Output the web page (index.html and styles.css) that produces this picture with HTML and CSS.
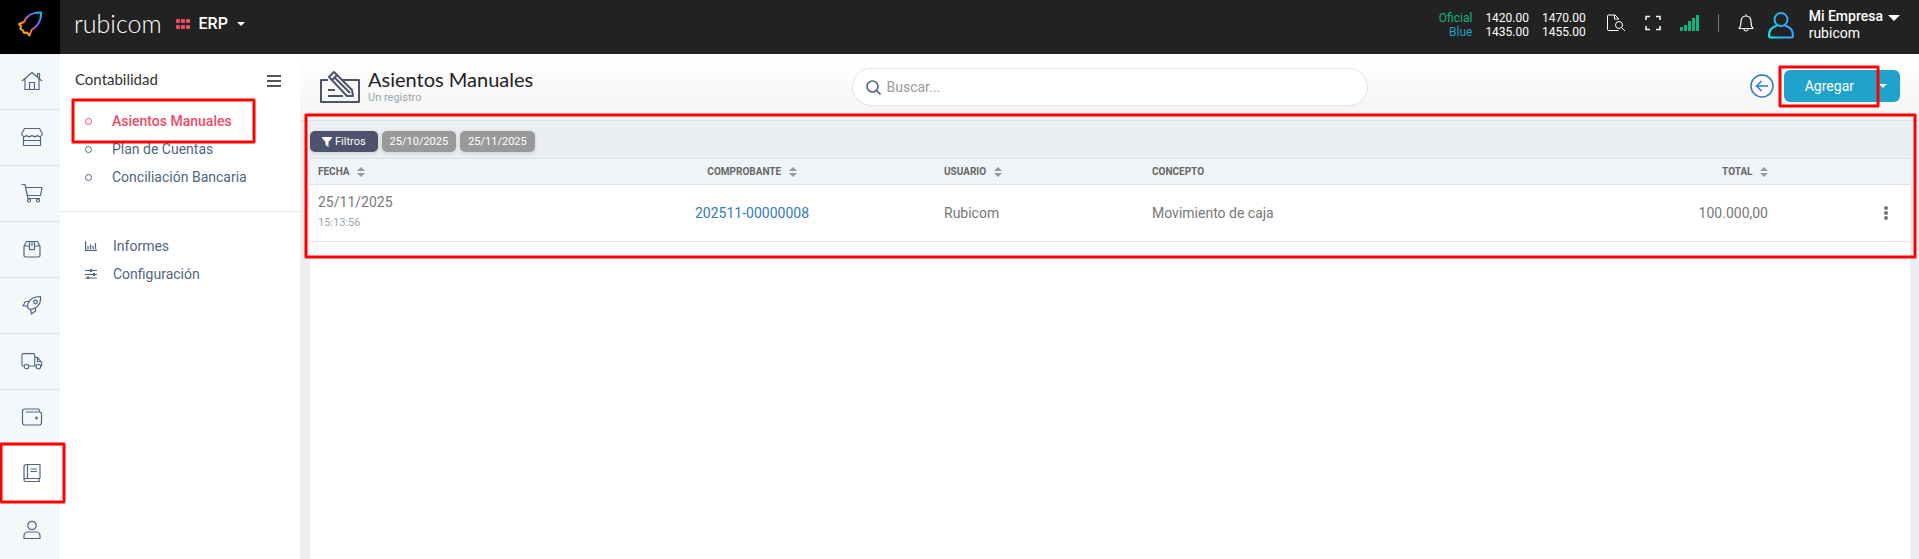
FILE: index.html
```html
<!DOCTYPE html>
<html lang="es">
<head>
    <meta charset="UTF-8">
    <meta name="viewport" content="width=device-width, initial-scale=1.0">
    <title>Asientos Manuales</title>
    <link rel="stylesheet" href="styles.css">
</head>
<body>

    <!-- Barra superior -->
    <header class="topbar">
        <a href="#" class="logo" aria-label="Inicio">
            <svg width="26" height="26" viewBox="0 0 26 26" fill="none" stroke-width="2" stroke-linecap="round" stroke-linejoin="round">
                <defs>
                    <linearGradient id="grad-logo" gradientUnits="userSpaceOnUse" x1="2" y1="20" x2="24" y2="6">
                        <stop offset="0" stop-color="#ffc107"/>
                        <stop offset="0.3" stop-color="#ff8a1e"/>
                        <stop offset="0.55" stop-color="#c44fc0"/>
                        <stop offset="0.75" stop-color="#6a5cf0"/>
                        <stop offset="1" stop-color="#22b8f0"/>
                    </linearGradient>
                </defs>
                <path stroke="url(#grad-logo)" d="M24 1.500C17 1 10 4 7 11L2 13L4 15L3.500 18L6 19.500L7 22L10 21.500L12.500 24.500L14.500 19C21 15 24.500 9 24 1.500Z"/>
            </svg>
        </a>
        <span class="marca">rubicom</span>
        <button type="button" class="modulo">
            <svg width="14" height="10" viewBox="0 0 14 10" fill="#ee4b67">
                <rect width="4" height="4" rx="1"/><rect x="5" width="4" height="4" rx="1"/><rect x="10" width="4" height="4" rx="1"/>
                <rect y="6" width="4" height="4" rx="1"/><rect x="5" y="6" width="4" height="4" rx="1"/><rect x="10" y="6" width="4" height="4" rx="1"/>
            </svg>
            <span>ERP</span>
            <i class="flecha"></i>
        </button>

        <div class="cotizaciones">
            <span class="oficial">Oficial</span><span>1420.00</span><span>1470.00</span>
            <span class="blue">Blue</span><span>1435.00</span><span>1455.00</span>
        </div>

        <div class="herramientas">
            <button type="button" aria-label="Buscar documento">
                <svg width="20" height="18" viewBox="0 0 20 18" fill="none" stroke="#fff">
                    <path d="M12.500 16.500H2.500Q1.500 16.500 1.500 15.500V2Q1.500 1 2.500 1H9L12.500 4.500V5.500M8.500 1V5H12.500"/>
                    <circle cx="13" cy="11" r="3.500"/><path d="M15.500 13.500L19 17"/>
                </svg>
            </button>
            <button type="button" aria-label="Pantalla completa">
                <svg width="16" height="16" viewBox="0 0 16 16" fill="none" stroke="#fff" stroke-width="1.500">
                    <path d="M1 5V1.500H5M11 1.500H15V5M15 11V14.500H11M5 14.500H1V11"/>
                </svg>
            </button>
            <svg width="19" height="16" viewBox="0 0 19 16" fill="#0fb67c">
                <rect y="12" width="3" height="4"/><rect x="4" y="10" width="3" height="6"/><rect x="8" y="6" width="3" height="10"/><rect x="12" y="3" width="3" height="13"/><rect x="16" width="3" height="16"/>
            </svg>
            <i class="separador"></i>
            <button type="button" aria-label="Notificaciones">
                <svg width="16" height="18" viewBox="0 0 16 18" fill="none" stroke="#fff" stroke-width="1.200" stroke-linecap="round" stroke-linejoin="round">
                    <path d="M8 .8V2M1 14.500H15C13 12.500 13 11 13 8Q13 2 8 2Q3 2 3 8C3 11 3 12.500 1 14.500ZM6 15.500Q8 18.500 10 15.500"/>
                </svg>
            </button>
        </div>

        <button type="button" class="usuario">
            <svg width="26" height="27" viewBox="0 0 26 27" fill="none" stroke="url(#grad-user)" stroke-width="2">
                <defs>
                    <linearGradient id="grad-user" gradientUnits="userSpaceOnUse" x1="0" y1="20" x2="26" y2="12">
                        <stop offset="0" stop-color="#0ff0f0"/>
                        <stop offset="0.5" stop-color="#22b4f4"/>
                        <stop offset="1" stop-color="#3f9cff"/>
                    </linearGradient>
                </defs>
                <circle cx="13" cy="7.500" r="6.500"/>
                <path d="M9 13.500C4 15 1 19 1 23.500Q1 25.500 3 25.500H23Q25 25.500 25 23.500C25 19 22 15 17 13.500"/>
            </svg>
            <span class="empresa"><b>Mi Empresa</b><span>rubicom</span></span>
            <i class="flecha grande"></i>
        </button>
    </header>

    <div class="cuerpo">
        <!-- Iconos laterales -->
        <nav class="riel">
            <a href="#" aria-label="Inicio">
                <svg class="ico" viewBox="0 0 22 20"><path d="M1 10L11 1.500L21 10M4 8V18.500H18V8M16.500 5.500V2.500H18.500V7.500M8.500 18.500V11.500H13.500V18.500"/></svg>
            </a>
            <a href="#" aria-label="Tienda">
                <svg class="ico" viewBox="0 0 22 20"><path d="M3.500 1.500H18.500L21 6V8Q19 11 16.500 8.500Q14 11 11 8.500Q8 11 5.500 8.500Q3 11 1 8V6ZM2.500 10V18.500H19.500V10M2.500 13.500H19.500"/></svg>
            </a>
            <a href="#" aria-label="Compras">
                <svg class="ico" viewBox="0 0 22 20"><path d="M.5 1.500H4L7 15.500H19M4.500 4.500H21L19.500 12.500H6.500"/><circle cx="8" cy="17.500" r="1.500"/><circle cx="17" cy="17.500" r="1.500"/></svg>
            </a>
            <a href="#" aria-label="Productos">
                <svg class="ico" viewBox="0 0 22 20"><path d="M3 7.500L5.500 2.500H16.500L19 7.500V16.500Q19 18 17.500 18H4.500Q3 18 3 16.500ZM3 7H8.500M13.500 7H19M8.500 2.500V10.500H13.500V2.500M11 2.500V7"/></svg>
            </a>
            <a href="#" aria-label="Proyectos">
                <svg class="ico" viewBox="0 0 22 20"><path d="M6.500 12.500C6.500 6 11 1.500 19.500 1.500C20.500 9 15.500 14 9 14.500ZM8 6.500H4.500L2 11H6.500M14.500 13V16L10.500 19L9.500 14.500"/><circle cx="14.500" cy="7" r="1.800"/></svg>
            </a>
            <a href="#" aria-label="Envíos">
                <svg class="ico" viewBox="0 0 24 20"><path d="M3.500 15.500H2.500Q1 15.500 1 14V3.500Q1 2 2.500 2H13.500Q15 2 15 3.500V15.500H8.500M15 6H18L22.500 11.500V15.500H21.500M16 15.500H15M18 6V10.500H22"/><circle cx="6" cy="16" r="2.500"/><circle cx="19" cy="16" r="2.500"/></svg>
            </a>
            <a href="#" aria-label="Caja">
                <svg class="ico" viewBox="0 0 22 20"><path d="M18.500 5V3.500Q18.500 2 17 2H4Q1.500 2 1.500 4.500V15.500Q1.500 18 4 18H18Q20.500 18 20.500 15.500V7Q20.500 5 18.500 5H5"/><circle cx="15.500" cy="11" r=".8"/></svg>
            </a>
            <a href="#" class="activo" aria-label="Contabilidad">
                <svg class="ico" viewBox="0 0 22 20"><path d="M19 15.500V1.500H5.500Q3 1.500 3 4V17Q3 18.500 4.500 18.500H19M18 15.500V18.500M3 17Q3 15.500 5 15.500H19M6.500 1.500V15.500M9.500 6H16M9.500 8.500H16"/></svg>
            </a>
            <a href="#" aria-label="Usuarios">
                <svg class="ico" viewBox="0 0 22 20"><circle cx="11" cy="5.500" r="4.200"/><path d="M7 12H15Q19 12 19 16V18.500H3V16Q3 12 7 12Z"/></svg>
            </a>
        </nav>

        <!-- Menú del módulo -->
        <aside class="menu">
            <div class="menu-titulo">
                <span>Contabilidad</span>
                <button type="button" class="hamburguesa" aria-label="Ocultar menú"><i></i><i></i><i></i></button>
            </div>
            <ul class="menu-lista">
                <li><a href="#" class="activo"><i class="punto"></i>Asientos Manuales</a></li>
                <li><a href="#"><i class="punto"></i>Plan de Cuentas</a></li>
                <li><a href="#"><i class="punto"></i>Conciliación Bancaria</a></li>
            </ul>
            <ul class="menu-lista extra">
                <li><a href="#">
                    <svg width="12" height="10" viewBox="0 0 12 10" fill="none" stroke="#506680" stroke-width="1.200"><path d="M.6 0V9.400H12M3 8V5M5.500 8V3.500M8 8V4.500M10.500 8V2"/></svg>Informes</a></li>
                <li><a href="#">
                    <svg width="12" height="10" viewBox="0 0 12 10" fill="none" stroke="#506680"><path d="M0 1.500H12M0 5.500H12M0 9H12"/><path stroke-width="2" d="M6 0V3M9 4V7M3 7.500V10"/></svg>Configuración</a></li>
            </ul>
        </aside>

        <!-- Contenido -->
        <main class="contenido">
            <div class="cabecera">
                <div class="titulo">
                    <svg width="40" height="32" viewBox="0 0 40 32" fill="none" stroke="#4e536b" stroke-width="2" stroke-linejoin="round">
                        <path d="M8 9H1V31H39V9H22M8 19H15M8 25H23"/>
                        <path d="M9 6L14 1L32 19L33 25H27L9 6ZM12 9L17 4M15 7L30 22"/>
                    </svg>
                    <div>
                        <h1>Asientos Manuales</h1>
                        <p>Un registro</p>
                    </div>
                </div>
                <label class="buscador">
                    <svg width="15" height="15" viewBox="0 0 15 15" fill="none" stroke="#506680" stroke-width="1.600"><circle cx="6.500" cy="6.500" r="5.500"/><path d="M10.500 10.500L14.500 14.500"/></svg>
                    <input type="text" placeholder="Buscar..." aria-label="Buscar">
                </label>
                <div class="acciones">
                    <a href="#" class="volver" aria-label="Volver">
                        <svg width="24" height="24" viewBox="0 0 24 24" fill="none" stroke="#3279bd" stroke-width="1.500"><circle cx="12" cy="12" r="11"/><path d="M18 12H7M11.500 7L6.500 12L11.500 17"/></svg>
                    </a>
                    <div class="grupo">
                        <button type="button" class="agregar">Agregar</button>
                        <button type="button" class="mas" aria-label="Más opciones"><i class="flecha"></i></button>
                    </div>
                </div>
            </div>

            <div class="panel">
                <div class="filtros">
                    <button type="button" class="filtro principal">
                        <svg width="10" height="10" viewBox="0 0 10 10" fill="#fff"><path d="M0 0H10V1L6.500 5V10L3.500 8V5L0 1Z"/></svg>Filtros
                    </button>
                    <button type="button" class="filtro">25/10/2025</button>
                    <button type="button" class="filtro">25/11/2025</button>
                </div>
                <div class="tabla-fondo">
                    <table class="tabla">
                        <thead>
                            <tr>
                                <th class="col-fecha">Fecha <i class="orden"></i></th>
                                <th class="col-comprobante">Comprobante <i class="orden"></i></th>
                                <th class="col-usuario">Usuario <i class="orden"></i></th>
                                <th class="col-concepto">Concepto</th>
                                <th class="col-total">Total <i class="orden"></i></th>
                                <th class="col-opciones"></th>
                            </tr>
                        </thead>
                        <tbody>
                            <tr>
                                <td>25/11/2025<small>15:13:56</small></td>
                                <td class="col-comprobante"><a href="#">202511-00000008</a></td>
                                <td>Rubicom</td>
                                <td>Movimiento de caja</td>
                                <td class="col-total">100.000,00</td>
                                <td class="col-opciones">
                                    <button type="button" class="opciones" aria-label="Opciones"><i></i><i></i><i></i></button>
                                </td>
                            </tr>
                        </tbody>
                    </table>
                </div>
            </div>
        </main>
    </div>

    <!-- Recuadros de la guía -->
    <div class="recuadro r-menu"></div>
    <div class="recuadro r-riel"></div>
    <div class="recuadro r-tabla"></div>
    <div class="recuadro r-agregar"></div>

</body>
</html>
```
FILE: styles.css
```css
* { margin: 0; padding: 0; box-sizing: border-box; }
body { position: relative; display: flex; flex-direction: column; min-height: 100vh; overflow-x: hidden; background: #ebeff4; color: #777; font-family: Roboto, sans-serif; font-size: 14px; line-height: 20px; }
a { color: inherit; text-decoration: none; }
button { background: none; border: none; color: inherit; font: inherit; cursor: pointer; }
svg { display: block; flex: none; }
ul { list-style: none; }

/* Barra superior */
.topbar { display: flex; align-items: center; height: 54px; padding-right: 19px; background: #222; color: #fff; }
.logo { display: flex; align-items: center; justify-content: center; width: 60px; height: 54px; padding-bottom: 6px; background: #000; }
.marca { margin-left: 14px; padding-bottom: 8px; font-family: Lato, sans-serif; font-size: 25px; font-weight: 300; line-height: 30px; }
.modulo { display: flex; align-items: center; gap: 9px; margin-left: 14px; padding-bottom: 6px; font-size: 16px; font-weight: 500; }
.flecha { border: 4px solid transparent; border-top-color: #fff; border-bottom: none; }
.flecha.grande { border-width: 6px; border-bottom: none; }
.cotizaciones { display: grid; grid-template-columns: auto auto auto; column-gap: 13px; margin-left: auto; padding-bottom: 5px; font-size: 12px; line-height: 14px; text-align: right; }
.oficial { color: #0fb67c; }
.blue { color: #1f9ec6; }
.herramientas { display: flex; align-items: center; gap: 19px; margin-left: 20px; padding-bottom: 8px; }
.separador { width: 1px; height: 18px; background: #777; }
.usuario { display: flex; align-items: flex-start; gap: 15px; margin-left: 14px; padding-bottom: 4px; text-align: left; }
.usuario svg { margin-top: 4px; }
.usuario .flecha { margin: 7px 0 0 -10px; }
.empresa { display: flex; flex-direction: column; line-height: 17px; }
.empresa b { font-weight: 500; }

.cuerpo { display: flex; flex: 1; }

/* Iconos laterales */
.riel { width: 60px; background: #f5f8fb; }
.riel a { display: flex; align-items: center; justify-content: center; height: 56px; padding: 0 0 1px 3px; border-bottom: 1px solid #dfe5ea; }
.riel a.activo { background: #fff; }
.riel a:last-child { border-bottom: none; }
.ico { width: 22px; height: 20px; fill: none; stroke: #506680; stroke-width: 1.2; stroke-linejoin: round; }

/* Menú del módulo */
.menu { width: 240px; background: #fff; color: #506680; }
.menu-titulo { display: flex; align-items: center; justify-content: space-between; height: 53px; padding: 0 19px 4px 15px; color: #333; font-family: Lato, sans-serif; font-size: 15px; }
.hamburguesa { display: flex; flex-direction: column; gap: 3px; padding-top: 4px; }
.hamburguesa i { width: 14px; height: 2px; background: #555; }
.menu-lista { padding-bottom: 20px; }
.menu-lista a { display: flex; align-items: center; height: 28px; padding-left: 25px; gap: 20px; }
.menu-lista a.activo { color: #ee4b67; font-weight: 500; }
.punto { width: 7px; height: 7px; border: 1px solid currentColor; border-radius: 50%; }
.extra { padding-top: 20px; border-top: 1px solid #e7eaec; }
.extra a { gap: 16px; }

/* Cabecera */
.contenido { display: flex; flex: 1; flex-direction: column; min-width: 0; }
.cabecera { display: grid; grid-template-columns: 1fr 516px 1fr; align-items: center; height: 67px; padding: 0 19px; background: linear-gradient(#fff, #f4f4f4); border-bottom: 1px solid #dde1e4; }
.titulo { display: flex; align-items: center; gap: 8px; padding-left: 1px; }
.titulo h1 { color: #222; font-family: Lato, sans-serif; font-size: 20px; font-weight: 400; line-height: 22px; }
.titulo p { color: #98a6ad; font-size: 11px; line-height: 16px; }
.buscador { display: flex; align-items: center; gap: 6px; height: 38px; padding: 0 13px; background: #fff; border: 1px solid #e2e4e6; border-radius: 19px; }
.buscador input { flex: 1; border: none; outline: none; background: none; color: #555; font: inherit; }
.buscador input::placeholder { color: #999; }
.acciones { display: flex; align-items: center; justify-content: flex-end; gap: 10px; padding-bottom: 2px; }
.grupo { display: flex; height: 32px; border-radius: 6px; background: #20a3cb; color: #fff; }
.agregar { padding: 0 21px; }
.mas { display: flex; align-items: center; padding: 0 13px 0 4px; }

/* Filtros y tabla */
.panel { display: flex; flex: 1; flex-direction: column; padding: 0 9px 0 10px; }
.filtros { display: flex; gap: 4px; padding: 10px 0 6px; }
.filtro { display: flex; align-items: center; gap: 3px; height: 21px; padding: 0 8px; border-radius: 5px; background: #999; color: #fff; font-size: 11px; box-shadow: 0 1px 4px rgba(0, 0, 0, .15); }
.filtro.principal { padding: 0 12px; background: #4e536b; }
.tabla-fondo { flex: 1; background: #fff; }
.tabla { width: 100%; border-collapse: collapse; table-layout: fixed; }
.tabla th { height: 26px; padding: 0 8px; background: #f1f4f7; border: 1px solid #dfe3e6; border-width: 1px 0; color: #666; font-size: 10px; font-weight: 700; text-align: left; text-transform: uppercase; }
.tabla td { height: 57px; padding: 0 8px; border-bottom: 1px solid #dfe3e6; }
.tabla td a { color: #3279bd; }
.tabla small { display: block; color: #98a6ad; font-size: 11px; line-height: 22px; }
.tabla .col-fecha { width: 258px; }
.tabla .col-comprobante { width: 23%; text-align: center; }
.tabla .col-usuario { width: 13%; }
.tabla .col-concepto { width: 25%; }
.tabla .col-total { text-align: right; }
.tabla .col-opciones { width: 134px; padding-right: 22px; }
.orden { display: inline-flex; flex-direction: column; gap: 2px; margin-left: 5px; vertical-align: middle; }
.orden::before, .orden::after { content: ""; border: 4px solid transparent; }
.orden::before { border-top: none; border-bottom-color: #8d9ba4; }
.orden::after { border-bottom: none; border-top-color: #8d9ba4; }
.opciones { display: flex; flex-direction: column; gap: 1px; margin-left: auto; }
.opciones i { width: 4px; height: 4px; border-radius: 50%; background: #777; }

/* Recuadros de la guía */
.recuadro { position: absolute; border: 2px solid #f00; border-radius: 1px; box-shadow: 0 0 0 1px rgba(255, 0, 0, .5), inset 0 0 0 1px rgba(255, 0, 0, .5); pointer-events: none; }
.r-menu { top: 99px; left: 72px; width: 183px; height: 44px; }
.r-riel { top: 443px; left: 0; width: 65px; height: 60px; }
.r-tabla { top: 114px; left: 305px; right: 3px; height: 144px; }
.r-agregar { top: 66px; right: 40px; width: 100px; height: 41px; }
```
